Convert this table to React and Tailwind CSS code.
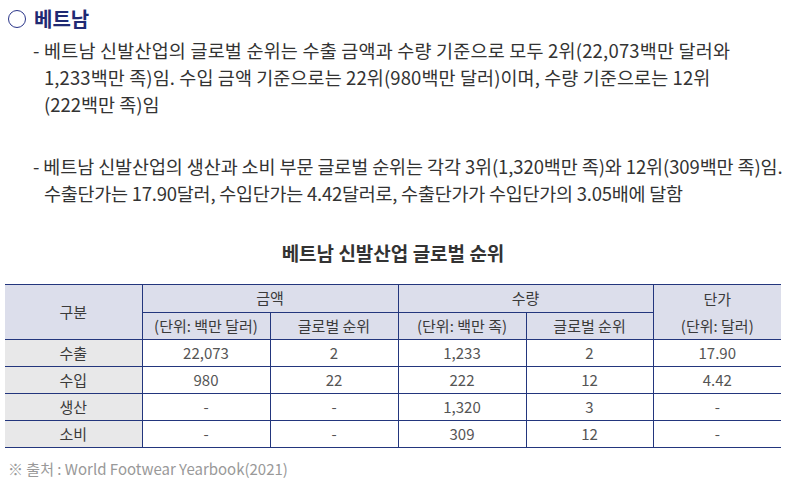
import React from "react";

const font = { fontFamily: '"Noto Sans CJK KR", "Noto Sans", sans-serif' };

function Cell({ children }) {
  return <td className="border-x border-[#23367d] text-center align-middle p-0">{children}</td>;
}

export default function App() {
  const rows = [
    ["수출", "22,073", "2", "1,233", "2", "17.90"],
    ["수입", "980", "22", "222", "12", "4.42"],
    ["생산", "-", "-", "1,320", "3", "-"],
    ["소비", "-", "-", "309", "12", "-"],
  ];
  return (
    <div className="w-[793px] h-[483px] bg-white overflow-hidden pt-[5px]" style={font}>
      <div className="flex items-center h-[28px] pl-[8px] gap-[8px]">
        <span className="w-[18px] h-[18px] rounded-full border-[1.5px] border-[#2a3589] box-border"></span>
        <span className="text-[20px] font-bold text-[#1f2a73] leading-[28px]">베트남</span>
      </div>
      <div className="mt-[4px] pl-[44px] text-[18.5px] leading-[27px] text-[#333] whitespace-nowrap">
        <div className="-ml-[11px] tracking-[0.2px]">
          - 베트남 신발산업의 글로벌 순위는 수출 금액과 수량 기준으로 모두 2위(22,073백만 달러와
        </div>
        <div className="tracking-[0.1px]">
          1,233백만 족)임. 수입 금액 기준으로는 22위(980백만 달러)이며, 수량 기준으로는 12위
        </div>
        <div>(222백만 족)임</div>
        <div className="-ml-[11px] mt-[35px] tracking-[-0.1px]">
          - 베트남 신발산업의 생산과 소비 부문 글로벌 순위는 각각 3위(1,320백만 족)와 12위(309백만 족)임.
        </div>
        <div className="tracking-[-0.24px]">
          수출단가는 17.90달러, 수입단가는 4.42달러로, 수출단가가 수입단가의 3.05배에 달함
        </div>
      </div>
      <div className="mt-[33px] ml-[5px] w-[776px] text-center text-[19px] font-bold leading-[26px] text-[#333]">
        베트남 신발산업 글로벌 순위
      </div>
      <table className="mt-[18px] ml-[5px] w-[776px] table-fixed border-collapse text-[15px] leading-[20px]">
        <colgroup>
          <col className="w-[137px]" />
          <col className="w-[128px]" />
          <col className="w-[128px]" />
          <col className="w-[128px]" />
          <col className="w-[127px]" />
          <col className="w-[128px]" />
        </colgroup>
        <thead className="bg-[#dcdeeb] text-[#3a3a3a]">
          <tr className="h-[27px] border-t border-[#23367d]">
            <th rowSpan={2} className="font-normal border-r border-[#23367d] p-0">구분</th>
            <th colSpan={2} className="font-normal border-x border-b border-[#23367d] p-0">금액</th>
            <th colSpan={2} className="font-normal border-x border-b border-[#23367d] p-0">수량</th>
            <th rowSpan={2} className="font-normal border-l border-[#23367d] p-0 leading-[27px]">
              단가
              <br />
              (단위: 달러)
            </th>
          </tr>
          <tr className="h-[27px] border-b border-[#23367d]">
            <th className="font-normal border-x border-[#23367d] p-0">(단위: 백만 달러)</th>
            <th className="font-normal border-x border-[#23367d] p-0">글로벌 순위</th>
            <th className="font-normal border-x border-[#23367d] p-0">(단위: 백만 족)</th>
            <th className="font-normal border-x border-[#23367d] p-0">글로벌 순위</th>
          </tr>
        </thead>
        <tbody className="text-[#555]">
          {rows.map((r) => (
            <tr key={r[0]} className="h-[27px] border-b border-[#23367d]">
              <td className="bg-[#e8e8e9] text-[#3a3a3a] text-center p-0 border-r border-[#23367d]">{r[0]}</td>
              <Cell>{r[1]}</Cell>
              <Cell>{r[2]}</Cell>
              <Cell>{r[3]}</Cell>
              <Cell>{r[4]}</Cell>
              <td className="text-center p-0 border-l border-[#23367d]">{r[5]}</td>
            </tr>
          ))}
        </tbody>
      </table>
      <div className="mt-[10px] pl-[8px] text-[15px] leading-[22px] text-[#999]">
        ※ 출처 : World Footwear Yearbook(2021)
      </div>
    </div>
  );
}
